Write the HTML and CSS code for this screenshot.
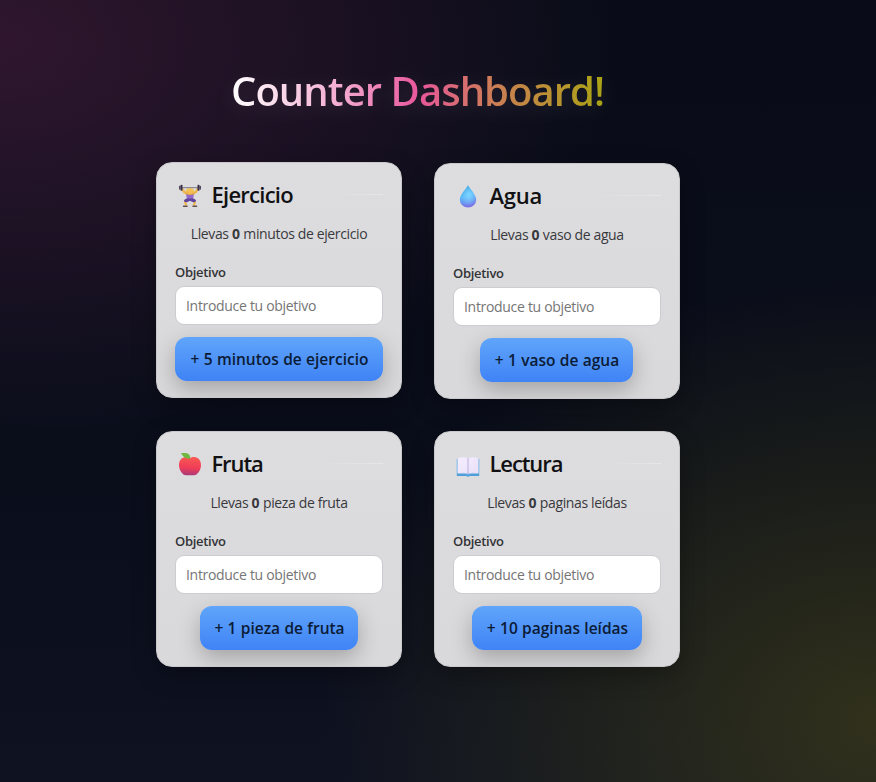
FILE: index.html
```html
<!DOCTYPE html>
<html lang="es">
<head>
<meta charset="utf-8">
<title>Counter Dashboard</title>
<link rel="stylesheet" href="styles.css">
</head>
<body>
<main class="dashboard">
  <h1 class="title">Counter Dashboard!</h1>
  <section class="grid">
    <article class="card card-active">
      <h2 class="card-title"><svg class="icon" viewBox="0 0 24 24">
        <defs><linearGradient id="hair" x2="0" y2="1"><stop stop-color="#f4d45b"/><stop offset="1" stop-color="#e8a443"/></linearGradient></defs>
        <path d="M4 5 6.500 8.300 9.500 10M20 5 17.500 8.300 14.500 10" fill="none" stroke="#edb74f" stroke-width="2.400" stroke-linecap="round" stroke-linejoin="round"/>
        <path d="M8 9h8l-1 7H9z" fill="#9269c6"/>
        <path d="M8 6.500Q8 4 12 4t4 2.500L17 10 12 11 7 10z" fill="url(#hair)"/>
        <circle cx="12" cy="7.500" r="2.500" fill="#f4bd55"/>
        <path d="M8.500 16 7 18.500 8.500 21.500M15.500 16l1.500 2.500-1.500 3" fill="none" stroke="#efb64c" stroke-width="2"/>
        <path d="M6 17q0-2 3.500-2.500h5Q18 15 18 17q-1 2-3.500 1L12 16.800 9.500 18Q7 19 6 17z" fill="#60449b"/>
        <path d="M5.500 22.300h3.600M15 22.300h3.600" stroke="#66504d" stroke-width="1.400" stroke-linecap="round"/>
        <path d="M3 3.700h18" stroke="#7b7687" stroke-width="1"/>
        <rect x="2.500" y=".7" width="2" height="6" rx=".8" fill="#393147"/><rect x="1" y="1.700" width="1.700" height="4" rx=".7" fill="#514960"/>
        <rect x="19.500" y=".7" width="2" height="6" rx=".8" fill="#393147"/><rect x="21.300" y="1.700" width="1.700" height="4" rx=".7" fill="#514960"/>
      </svg><span class="name n1">Ejercicio</span></h2>
      <p class="status">Llevas <b>0</b> minutos de ejercicio</p>
      <label class="label" for="g1">Objetivo</label>
      <input class="goal" id="g1" placeholder="Introduce tu objetivo">
      <button class="add a1"><span>+ 5 minutos de ejercicio</span></button>
    </article>
    <article class="card">
      <h2 class="card-title"><svg class="icon" viewBox="0 0 24 24">
        <defs><linearGradient id="drop" x1=".2" x2=".4" y2="1"><stop stop-color="#2e9ad5"/><stop offset=".5" stop-color="#58b8fa"/><stop offset="1" stop-color="#7b70e5"/></linearGradient><radialGradient id="shine" cx=".55" cy=".45" r=".5"><stop stop-color="#7ed5ff"/><stop offset="1" stop-color="#7ed5ff" stop-opacity="0"/></radialGradient></defs>
        <path d="M12 .2C10.500 3.500 3.800 9.500 3.800 14.700a8.200 7.800 0 0 0 16.400 0C20.200 9.500 13.500 3.500 12 .2z" fill="url(#drop)"/>
        <path d="M12 .2C10.500 3.500 3.800 9.500 3.800 14.700a8.200 7.800 0 0 0 16.400 0C20.200 9.500 13.500 3.500 12 .2z" fill="url(#shine)"/>
      </svg><span class="name n2">Agua</span></h2>
      <p class="status">Llevas <b>0</b> vaso de agua</p>
      <label class="label" for="g2">Objetivo</label>
      <input class="goal" id="g2" placeholder="Introduce tu objetivo">
      <button class="add a2"><span>+ 1 vaso de agua</span></button>
    </article>
    <article class="card">
      <h2 class="card-title"><svg class="icon" viewBox="0 0 24 24">
        <defs><linearGradient id="apple" x1=".6" x2=".5" y2="1"><stop stop-color="#f85a52"/><stop offset=".6" stop-color="#f03c58"/><stop offset="1" stop-color="#a93a78"/></linearGradient></defs>
        <path d="M12 5.200C9 2.800 1 3.800 1 12c0 5 3.500 10.300 7 10.300h8c3.500 0 7-5.300 7-10.300 0-8.200-8-9.200-11-6.800z" fill="url(#apple)"/>
        <path d="M12.300 5.500C8.500 6 6 5 3 .3 8-1 12.800.7 12.300 5.500z" fill="#70b843"/>
      </svg><span class="name n3">Fruta</span></h2>
      <p class="status">Llevas <b>0</b> pieza de fruta</p>
      <label class="label" for="g3">Objetivo</label>
      <input class="goal" id="g3" placeholder="Introduce tu objetivo">
      <button class="add a3"><span>+ 1 pieza de fruta</span></button>
    </article>
    <article class="card">
      <h2 class="card-title"><svg class="icon" viewBox="0 0 24 24">
        <defs><linearGradient id="page" x2="1" y2="1"><stop stop-color="#f5edff"/><stop offset="1" stop-color="#e9e0f8"/></linearGradient></defs>
        <path d="M.8 6h22.400v17H14l-2 .7-2-.7H.8z" fill="#4e9fdc"/>
        <path d="M.8 6h1.400v14.500H.8zM21.800 6h1.400v14.500h-1.400z" fill="#a8caee"/>
        <path d="M2 20.500V5q5.500-1.300 10 0 4.500-1.300 10 0v15.500q-6-.5-10 .5-4-1-10-.5z" fill="url(#page)"/>
        <path d="M12 5v16" stroke="#b8b1da" stroke-width="1"/><path d="M2 20.500q6-.5 10 .5 4-1 10-.5" fill="none" stroke="#9fbfe8" stroke-width="1"/>
      </svg><span class="name n4">Lectura</span></h2>
      <p class="status">Llevas <b>0</b> paginas leídas</p>
      <label class="label" for="g4">Objetivo</label>
      <input class="goal" id="g4" placeholder="Introduce tu objetivo">
      <button class="add a4"><span>+ 10 paginas leídas</span></button>
    </article>
  </section>
</main>
</body>
</html>
```
FILE: styles.css
```css
* { box-sizing: border-box; }
body {
  margin: 0;
  height: 782px;
  overflow: hidden;
  font-family: "Open Sans", "Noto Sans", sans-serif;
  background:
    radial-gradient(1000px 640px at 0% 5%, rgba(236, 72, 153, .17), transparent 62%),
    radial-gradient(860px 680px at 100% 92%, rgba(190, 175, 10, .2), transparent 65%),
    linear-gradient(180deg, #090c18 0%, #0a0e1b 60%, #0e1221 100%);
}
.dashboard { width: 524px; margin-left: 156px; padding-top: 64px; }
.title {
  width: 374px;
  height: 54px;
  margin: 0 0 45px 75px;
  font-size: 40px;
  line-height: 54px;
  font-weight: 540;
  white-space: nowrap;
  letter-spacing: -.95px;
  color: transparent;
  background: linear-gradient(90deg, #fff 0%, #f3a9cf 30%, #e8579c 50%, #cc7d55 70%, #aaa414 100%);
  background-clip: text;
  -webkit-background-clip: text;
  filter: drop-shadow(0 4px 10px rgba(255, 255, 255, .1));
}
.grid { display: grid; grid-template-columns: 246px 246px; gap: 32px; }
.card {
  height: 236px;
  padding: 17px 18px;
  border: 1px solid #c9c9cc;
  border-radius: 16px;
  background: linear-gradient(180deg, #dddddf, #d9d9db);
  box-shadow: 0 8px 24px rgba(0, 0, 0, .3);
  display: flex;
  flex-direction: column;
  align-items: center;
  overflow: hidden;
}
.card-active { transform: translateY(-1px); }
.card-title {
  align-self: stretch;
  display: flex;
  align-items: center;
  height: 31px;
  margin: 0;
  font-size: 22px;
  line-height: 29px;
  font-weight: 540;
  color: #111113;
}
.card-title::after {
  content: "";
  flex: 1;
  height: 1px;
  margin: 0 0 2px 12px;
  background: linear-gradient(90deg, transparent 35%, #e6e6e8);
}
.icon { width: 24px; height: 24px; margin: 0 9.500px 0 3px; flex: none; }
.name { padding-bottom: 2px; }
.n1 { letter-spacing: -.75px; }
.n2 { letter-spacing: -.2px; }
.n3, .n4 { letter-spacing: -1.100px; }
.name, .status, .add span { white-space: nowrap; }
.status {
  margin: 13px 0 1px;
  height: 20px;
  font-size: 14px;
  line-height: 20px;
  color: #39393d;
  letter-spacing: -.37px;
}
.status b { margin: 0 .5px 0 0; }
.label {
  align-self: flex-start;
  height: 18px;
  margin-top: 18px;
  font-size: 13px;
  line-height: 18px;
  font-weight: 600;
  color: #333337;
  letter-spacing: -.3px;
}
.goal {
  width: 208px;
  height: 39px;
  flex: none;
  margin: 5px 0 12px;
  padding: 0 10px;
  border: 1px solid #cbcbd0;
  border-radius: 9px;
  background: #fff;
  font: 14px "Open Sans", "Noto Sans", sans-serif;
  letter-spacing: -.31px;
}
.goal::placeholder { color: #757575; }
.add {
  flex: none;
  display: flex;
  align-items: center;
  justify-content: center;
  height: 44px;
  padding: 0;
  border: 0;
  border-radius: 12px;
  background: linear-gradient(180deg, #60a5fa, #3f83f6);
  color: #0b1b36;
  font: 600 15.500px "Open Sans", "Noto Sans", sans-serif;
  box-shadow: 0 8px 22px rgba(0, 0, 0, .25);
}
.add span { padding: 0 0 1px 1px; word-spacing: .3px; }
.a1 { width: 208px; }
.a2 { width: 153px; margin-right: 1px; }
.a3 { width: 158px; }
.a4 { width: 170px; }
```
